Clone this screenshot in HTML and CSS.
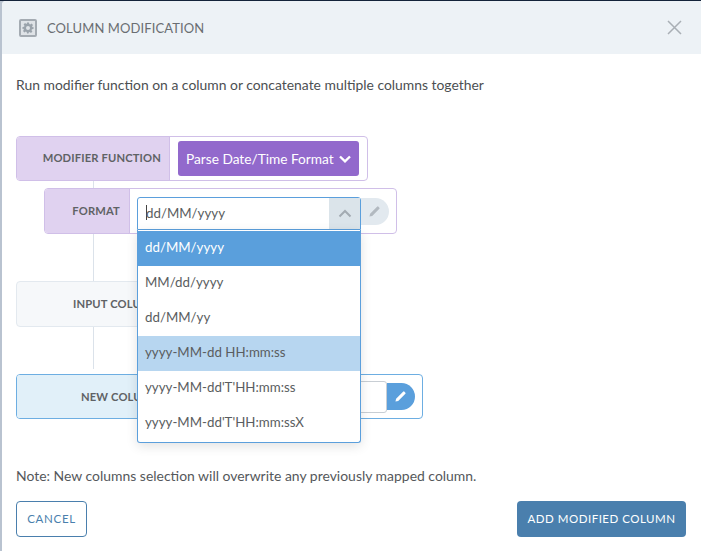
FILE: index.html
```html
<!DOCTYPE html>
<html lang="en">
<head>
<meta charset="utf-8">
<title>Column Modification</title>
<link rel="stylesheet" href="styles.css">
</head>
<body>
<div class="modal">
  <header class="modal-header">
    <span class="gear-box">
      <svg width="12" height="12" viewBox="0 0 24 24"><path fill="#9aa3ab" fill-rule="evenodd" d="M10 1h4l.6 3.2 1.9.8 2.7-1.8 2.8 2.8-1.8 2.7.8 1.9L23 10v4l-3.2.6-.8 1.9 1.8 2.7-2.8 2.8-2.7-1.8-1.900.8L13 23h-3l-.6-3.2-1.900-.8-2.700 1.800L2 18l1.800-2.700-.8-1.900L1 14v-4l3.200-.6.8-1.900L3.200 4.800 6 2l2.700 1.800 1-.6zM12 8a4 4 0 1 0 0 8 4 4 0 0 0 0-8z"/></svg>
    </span>
    <h1 class="modal-title">COLUMN MODIFICATION</h1>
    <svg class="close-icon" width="15" height="15" viewBox="0 0 15 15"><path d="M1 1l13 13M14 1L1 14" stroke="#a9afb5" stroke-width="1.500" fill="none"/></svg>
  </header>
  <div class="modal-body">
    <p class="description">Run modifier function on a column or concatenate multiple columns together</p>
    <div class="form">
      <div class="connector"></div>
      <div class="row row-purple row-modifier">
        <div class="label label-modifier">MODIFIER FUNCTION</div>
        <div class="cell">
          <div class="purple-select">Parse Date/Time Format
            <svg width="12" height="8" viewBox="0 0 12 8"><path d="M1 1.500L6 6.300l5-4.800" stroke="#fff" stroke-width="2.400" fill="none"/></svg>
          </div>
        </div>
      </div>
      <div class="row row-purple row-format">
        <div class="label label-format">FORMAT</div>
        <div class="cell cell-format">
          <div class="combo">
            <div class="combo-value"><span class="caret"></span>dd/MM/yyyy</div>
            <div class="combo-arrow">
              <svg width="14" height="9" viewBox="0 0 14 9"><path d="M1.500 7.500L7 2l5.500 5.500" stroke="#a3abb2" stroke-width="2" fill="none"/></svg>
            </div>
          </div>
          <div class="pen-btn pen-muted">
            <svg width="11" height="11" viewBox="0 0 12 12"><path d="M0.500 11.500l.7-3L8.500 1.200l2.300 2.300L3.500 10.800zM9.200.5l.6-.1 1.800 1.800-.1.6-.7.700-2.300-2.300z" fill="#b2b9c0"/></svg>
          </div>
          <ul class="menu">
            <li class="opt opt-active">dd/MM/yyyy</li>
            <li class="opt">MM/dd/yyyy</li>
            <li class="opt">dd/MM/yy</li>
            <li class="opt opt-hover">yyyy-MM-dd HH:mm:ss</li>
            <li class="opt">yyyy-MM-dd'T'HH:mm:ss</li>
            <li class="opt">yyyy-MM-dd'T'HH:mm:ssX</li>
          </ul>
        </div>
      </div>
      <div class="row row-grey">
        <div class="label label-wide">INPUT COLUMN</div>
      </div>
      <div class="row row-blue">
        <div class="label label-new">NEW COLUMN</div>
        <div class="cell cell-new">
          <div class="text-input"></div>
          <div class="pen-btn pen-blue">
            <svg width="11" height="11" viewBox="0 0 12 12"><path d="M0.500 11.500l.7-3L8.500 1.200l2.300 2.300L3.500 10.800zM9.200.5l.6-.1 1.800 1.800-.1.6-.7.700-2.300-2.300z" fill="#fff"/></svg>
          </div>
        </div>
      </div>
    </div>
    <p class="note">Note: New columns selection will overwrite any previously mapped column.</p>
    <div class="actions">
      <button class="btn btn-cancel">CANCEL</button>
      <button class="btn btn-primary">ADD MODIFIED COLUMN</button>
    </div>
  </div>
</div>
</body>
</html>
```
FILE: styles.css
```css
* { box-sizing: border-box; }
html, body { margin: 0; height: 100%; }
body {
  background: #b9c3d0;
  border-top: 1px solid #14233a;
  padding-left: 2px;
  overflow: hidden;
  font-family: "Lato", "Liberation Sans", sans-serif;
  color: #55585b;
}
.modal {
  height: 550px;
  background: #fff;
  border-radius: 4px 0 0 0;
  display: flex;
  flex-direction: column;
  overflow: hidden;
}
.modal-header {
  height: 53px;
  flex: none;
  background: #edf2f6;
  display: flex;
  align-items: center;
  padding: 0 19px 0 17px;
}
.gear-box {
  width: 18px;
  height: 18px;
  border: 2px solid #a4abb2;
  border-radius: 2px;
  background: #dfe3e7;
  display: flex;
  align-items: center;
  justify-content: center;
  margin-top: 1px;
}
.modal-title {
  margin: 0 0 0 10px;
  flex: 1;
  font-size: 13px;
  font-weight: 400;
  color: #6a6e72;
  letter-spacing: 0.1px;
}
.modal-body { flex: 1; padding: 0 15px 0 14px; display: flex; flex-direction: column; }
.description {
  margin: 22px 0 0;
  font-size: 13.900px;
  line-height: 17px;
  color: #4c4f52;
}
.form { position: relative; margin-top: 43px; height: 283px; }
.connector {
  position: absolute;
  left: 77px;
  top: 40px;
  bottom: 50px;
  width: 1px;
  background: #dbe2ea;
}
.row {
  position: relative;
  display: flex;
  border: 1px solid;
  border-radius: 4px;
  background: #fff;
}
.row-purple { border-color: #d0bfe8; }
.row-modifier { width: 352px; height: 45px; }
.row-format { width: 353px; height: 46px; margin: 7px 0 0 28px; }
.row-grey {
  width: 220px;
  height: 46px;
  margin-top: 47px;
  border-color: #e3e9ef;
  background: #f6f8fa;
}
.row-blue {
  width: 407px;
  height: 45px;
  margin-top: 47px;
  border-color: #6daee2;
  background: #fff;
}
.label {
  flex: none;
  display: flex;
  align-items: center;
  justify-content: flex-end;
  font-size: 11.200px;
  font-weight: 700;
  color: #5f6265;
  letter-spacing: 0.15px;
}
.label-modifier {
  width: 153px;
  background: #e0d2f0;
  border-right: 1px solid #d0bfe8;
  padding: 0 8px 2px 0;
  border-radius: 3px 0 0 3px;
}
.label-format {
  width: 85px;
  background: #e0d2f0;
  border-right: 1px solid #d0bfe8;
  padding: 0 9px 2px 0;
  border-radius: 3px 0 0 3px;
}
.label-wide { width: 153px; padding: 0 0 2px 56px; justify-content: flex-start; }
.label-new {
  width: 220px;
  justify-content: flex-start;
  background: #e1f0f9;
  padding: 0 0 1px 64px;
  border-radius: 3px 0 0 3px;
}
.cell { display: flex; align-items: center; padding-left: 8px; }
.cell-format { position: relative; padding-left: 7px; align-items: flex-start; padding-top: 8px; }
.purple-select {
  width: 181px;
  height: 35px;
  border-radius: 3px;
  background: #9269cc;
  color: #fff;
  font-size: 13.700px;
  display: flex;
  align-items: center;
  justify-content: space-between;
  padding: 0 8px;
}
.combo {
  width: 224px;
  height: 33px;
  border: 1px solid #5b9fdc;
  border-radius: 3px 3px 0 0;
  display: flex;
  background: #fff;
}
.combo-value {
  flex: 1;
  display: flex;
  align-items: center;
  padding: 0 0 2px 8px;
  font-size: 13.300px;
  color: #5a5d60;
}
.caret { width: 1px; height: 15px; background: #444; margin-right: -1px; }
.combo-arrow {
  width: 31px;
  background: #dbe4ea;
  display: flex;
  align-items: center;
  justify-content: center;
}
.pen-btn {
  width: 28px;
  height: 27px;
  border-radius: 0 14px 14px 0;
  display: flex;
  align-items: center;
  justify-content: center;
  padding-right: 2px;
}
.pen-muted { background: #e2e9ef; margin-top: 1px; }
.pen-blue { background: #5a9fdc; }
.menu {
  position: absolute;
  z-index: 2;
  left: 7px;
  top: 41px;
  width: 224px;
  margin: 0;
  padding: 1px 0 1px;
  list-style: none;
  background: #fff;
  border: 1px solid #5b9fdc;
  border-top: 0;
  border-radius: 0 0 3px 3px;
  box-shadow: 0 3px 12px rgba(0, 0, 0, 0.12);
}
.opt {
  height: 35px;
  display: flex;
  align-items: center;
  padding: 0 0 3px 7px;
  font-size: 13.300px;
  color: #5a5d60;
}
.opt-active { background: #5a9fdc; color: #fff; height: 35px; padding-bottom: 4px; }
.opt-hover { background: #b7d6f0; }
.cell-new { margin-left: -1px; padding-left: 0; }
.text-input {
  width: 151px;
  height: 32px;
  border: 1px solid #c8ced4;
  border-radius: 3px;
  background: #fff;
}
.note {
  margin: 48px 0 0;
  font-size: 13.950px;
  line-height: 17px;
  color: #55585b;
}
.actions {
  display: flex;
  justify-content: space-between;
  margin-top: 17px;
}
.btn {
  height: 36px;
  border-radius: 4px;
  font-family: inherit;
  font-size: 11.500px;
  letter-spacing: 0.5px;
  padding: 0 0 2px;
}
.btn-cancel { width: 71px; background: #fff; border: 1px solid #4a7fad; color: #4a7fad; letter-spacing: 0.7px; }
.btn-primary { width: 169px; background: #4a7fad; border: 0; color: #fff; }
```
